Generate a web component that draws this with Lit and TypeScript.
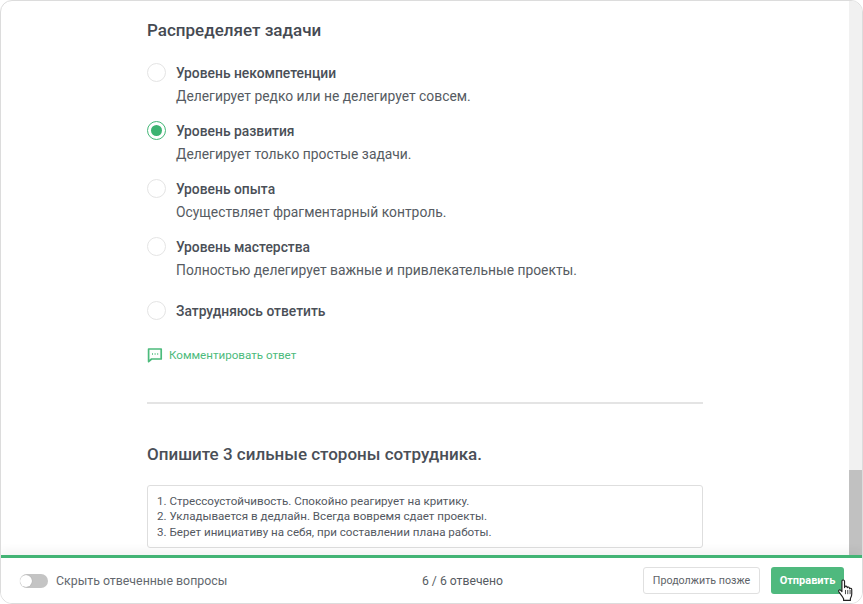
import { LitElement, html, css } from "lit";
import { customElement } from "lit/decorators.js";

const options = [
  { title: "Уровень некомпетенции", desc: "Делегирует редко или не делегирует совсем.", on: false },
  { title: "Уровень развития", desc: "Делегирует только простые задачи.", on: true },
  { title: "Уровень опыта", desc: "Осуществляет фрагментарный контроль.", on: false },
  { title: "Уровень мастерства", desc: "Полностью делегирует важные и привлекательные проекты.", on: false },
];

@customElement("app-root")
export class AppRoot extends LitElement {
  static styles = css`
    :host { display: block; width: 863px; height: 604px; background: #fff; font-family: Roboto, "Noto Sans", sans-serif; color: #4a4f57; }
    .window { box-sizing: border-box; position: relative; width: 863px; height: 604px; display: flex; flex-direction: column; overflow: hidden; border: 1px solid #dcdcdc; border-radius: 12px; background: #fff; }
    .main { height: 554px; flex: none; display: flex; overflow: hidden; position: relative; }
    .content { flex: 1; padding: 17px 0 0 146px; box-sizing: border-box; }
    .inner { width: 556px; }
    h2 { margin: 0; font-size: 17px; line-height: 24px; font-weight: 500; color: #454a52; }
    .options { margin-top: 19px; display: flex; flex-direction: column; }
    .opt { display: flex; gap: 10px; height: 58px; }
    .radio { box-sizing: border-box; width: 19px; height: 19px; margin-top: 2px; border: 1.5px solid #e4e4e4; border-radius: 50%; background: #fff; flex: none; display: flex; align-items: center; justify-content: center; }
    .radio.on { border: 1.5px solid #45b878; }
    .radio.on i { display: block; width: 11px; height: 11px; border-radius: 50%; background: #3cb371; }
    .title { font-size: 13.85px; line-height: 24px; font-weight: 500; color: #4a4f57; }
    .desc { font-size: 13.85px; line-height: 22px; color: #565b62; }
    .opt.last { height: 24px; margin-top: 6px; }
    .comment { display: flex; align-items: center; gap: 6px; margin-top: 20px; height: 24px; font-size: 11.6px; color: #4cbb7c; }
    hr { border: 0; height: 1.5px; background: #e4e4e4; margin: 35px 0 0; }
    .q { margin-top: 38px; font-size: 17px; line-height: 24px; font-weight: 500; }
    .answer { box-sizing: border-box; height: 63px; margin-top: 19px; padding: 8px 9px; border: 1px solid #dedede; border-radius: 3px; font-size: 11.6px; line-height: 15.5px; color: #53585f; }
    .track { width: 13px; flex: none; background: #f1f1f1; display: flex; flex-direction: column; justify-content: flex-end; }
    .thumb { height: 85px; background: #c1c1c1; }
    .footer { flex: 1; display: flex; align-items: center; border-top: 3px solid #43b475; padding: 0 18px 0 19px; box-shadow: 0 -6px 8px rgba(0,0,0,0.04); position: relative; background: #fff; }
    .left { display: flex; align-items: center; gap: 8px; width: 390px; font-size: 12.35px; color: #63686e; }
    .toggle { width: 28px; height: 14px; border-radius: 7px; background: #c4c4c4; position: relative; flex: none; }
    .toggle::after { content: ""; position: absolute; left: 0; top: 1px; width: 12px; height: 12px; border-radius: 50%; background: #fff; box-shadow: 0 0 1px rgba(0,0,0,0.3); }
    .count { width: 105px; font-size: 12.2px; color: #565b62; text-align: center; }
    .actions { margin-left: auto; display: flex; gap: 11px; }
    .btn { box-sizing: border-box; height: 27px; display: flex; align-items: center; justify-content: center; border-radius: 3px; font-family: Roboto, sans-serif; }
    .later { width: 117px; border: 1px solid #e0e0e0; color: #5e6368; background: #fff; font-size: 10.7px; }
    .send { width: 73px; background: #4fb97e; color: #fff; font-weight: 700; font-size: 11px; }
    .cursor { position: absolute; left: 836px; top: 578px; }
  `;

  render() {
    return html`<div class="window">
      <div class="main">
        <div class="content"><div class="inner">
          <h2>Распределяет задачи</h2>
          <div class="options">
            ${options.map(o => html`<div class="opt">
              <span class="radio ${o.on ? "on" : ""}">${o.on ? html`<i></i>` : ""}</span>
              <div><div class="title">${o.title}</div><div class="desc">${o.desc}</div></div>
            </div>`)}
            <div class="opt last"><span class="radio"></span><div class="title">Затрудняюсь ответить</div></div>
          </div>
          <div class="comment">
            <svg width="16" height="16" viewBox="0 0 16 16" fill="none" stroke="#4cbb7c" stroke-width="1.7"><path d="M2 2h12.2v10H4.6L1.6 14.6V2z" stroke-linejoin="round"/><path d="M5 7h1M7.6 7h1M10.2 7h1" stroke-width="1.4"/></svg>
            Комментировать ответ
          </div>
          <hr />
          <div class="q">Опишите 3 сильные стороны сотрудника.</div>
          <div class="answer">
            1. Стрессоустойчивость. Спокойно реагирует на критику.<br />
            2. Укладывается в дедлайн. Всегда вовремя сдает проекты.<br />
            3. Берет инициативу на себя, при составлении плана работы.
          </div>
        </div></div>
        <div class="track"><div class="thumb"></div></div>
      </div>
      <div class="footer">
        <div class="left"><span class="toggle"></span>Скрыть отвеченные вопросы</div>
        <div class="count">6 / 6 отвечено</div>
        <div class="actions">
          <div class="btn later">Продолжить позже</div>
          <div class="btn send">Отправить</div>
        </div>
      </div>
      <svg class="cursor" width="18" height="23" viewBox="0 0 17 22"><path d="M4.600 2.200c0-1.700 2.500-1.700 2.500 0V8.200l.3-.8c.4-1 2-.8 2.200.3l.1.6c.4-.9 1.900-.8 2.100.3l.1.7c.5-.7 2-.5 2.100.7v4.400c0 2-.7 3-1.300 4.300v1.800H6.200v-1.700C5 16.200 3.400 14.800 1.600 12.200c-.8-1.300.7-2.400 1.900-1.300L4.600 12z" fill="#fff" stroke="#222" stroke-width="1.100" stroke-linejoin="round"/><path d="M8 10.500v4M10.200 10.500v4M12.400 10.500v4" stroke="#222" stroke-width=".8"/></svg>
    </div>`;
  }
}
